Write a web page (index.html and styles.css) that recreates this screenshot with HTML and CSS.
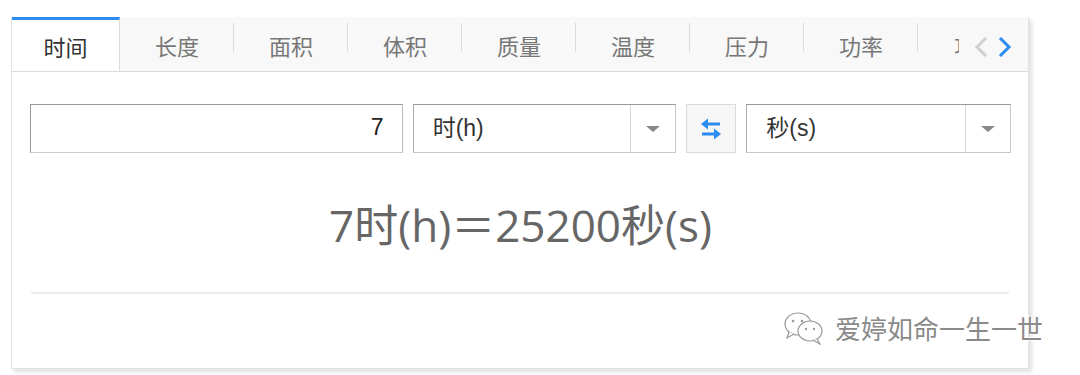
FILE: index.html
```
<!DOCTYPE html>
<html lang="zh-CN">

<head>
  <meta charset="UTF-8" />
  <title>单位换算</title>
  <link rel="stylesheet" href="styles.css">
</head>

<body>

  <div class="card">
    <div class="tabs">
      <div class="tab-list">
        <div class="tab active">时间</div>
        <div class="tab">长度</div>
        <div class="tab">面积</div>
        <div class="tab">体积</div>
        <div class="tab">质量</div>
        <div class="tab">温度</div>
        <div class="tab">压力</div>
        <div class="tab">功率</div>
        <div class="tab">功</div>
      </div>
      <div class="tab-nav">
        <svg class="nav-prev" width="16" height="22" viewBox="0 0 16 22">
          <path d="M13 2 L4 11 L13 20" fill="none" stroke="#cfcfcf" stroke-width="3" />
        </svg>
        <svg class="nav-next" width="16" height="22" viewBox="0 0 16 22">
          <path d="M3 2 L12 11 L3 20" fill="none" stroke="#2d8cf0" stroke-width="3" />
        </svg>
      </div>
    </div>

    <div class="panel">
      <div class="convert-row">
        <input type="text" class="num-input" value="7" />
        <div class="unit-select">
          <span class="unit-text">时(h)</span>
          <span class="unit-arrow"></span>
        </div>
        <button class="swap-btn">
          <svg width="22" height="24" viewBox="0 0 22 24">
            <path d="M3 7 H20" stroke="#2d8cf0" stroke-width="3" fill="none" />
            <path d="M1 7 L8 1.5 L8 12.5 Z" fill="#2d8cf0" />
            <path d="M2 17 H19" stroke="#2d8cf0" stroke-width="3" fill="none" />
            <path d="M21 17 L14 11.5 L14 22.5 Z" fill="#2d8cf0" />
          </svg>
        </button>
        <div class="unit-select">
          <span class="unit-text">秒(s)</span>
          <span class="unit-arrow"></span>
        </div>
      </div>

      <div class="result">7时(h)＝25200秒(s)</div>

      <div class="divider"></div>
    </div>
  </div>

  <div class="watermark">
    <svg width="42" height="34" viewBox="0 0 42 34">
      <ellipse cx="15" cy="13" rx="13" ry="11" fill="#fff" stroke="#999" stroke-width="1.2" />
      <path d="M6 21 L4 27 L11 23" fill="#fff" stroke="#999" stroke-width="1.2" />
      <ellipse cx="27" cy="20" rx="12" ry="10" fill="#fff" stroke="#999" stroke-width="1.2" />
      <path d="M34 28 L37 33 L30 29" fill="#fff" stroke="#999" stroke-width="1.2" />
      <circle cx="10" cy="10" r="1.3" fill="#999" />
      <circle cx="19" cy="10" r="1.3" fill="#999" />
      <circle cx="23" cy="18" r="1.2" fill="#999" />
      <circle cx="31" cy="18" r="1.2" fill="#999" />
    </svg>
    <span>爱婷如命一生一世</span>
  </div>

</body>

</html>
```

FILE: styles.css
```
body {
  margin: 0;
  background: #fff;
  font-family: "Liberation Sans", "Noto Sans CJK SC", sans-serif;
  position: relative;
  width: 1080px;
  height: 375px;
  overflow: hidden;
}

.card {
  margin: 17px 0 0 11px;
  width: 1016px;
  height: 351px;
  border: 1px solid #e2e2e2;
  border-top: none;
  box-shadow: 3px 3px 4px rgba(0, 0, 0, 0.12);
  background: #fff;
}

.tabs {
  display: flex;
  height: 54px;
  background: #f8f8f8;
  border-bottom: 1px solid #dcdcdc;
}

.tab-list {
  display: flex;
  width: 947px;
  overflow: hidden;
  flex-shrink: 0;
}

.tab {
  position: relative;
  flex-shrink: 0;
  width: 114px;
  height: 54px;
  line-height: 56px;
  text-align: center;
  font-size: 22px;
  color: #777;
  font-family: "Noto Sans CJK SC", sans-serif;
}

.tab::after {
  content: "";
  position: absolute;
  right: 0;
  top: 6px;
  width: 1px;
  height: 29px;
  background: #dadada;
}

.tab.active {
  width: 107px;
  height: 52px;
  line-height: 53px;
  background: #fff;
  color: #333;
  border-top: 3px solid #2d8cf0;
  border-right: 1px solid #dcdcdc;
  margin-bottom: -1px;
}

.tab.active::after,
.tab:nth-child(8)::after {
  display: none;
}

.tab:nth-child(8)::before {
  content: "";
  position: absolute;
  right: 0;
  top: 6px;
  width: 1px;
  height: 29px;
  background: #dadada;
}

.tab:last-child {
  text-align: left;
  padding-left: 36px;
  box-sizing: border-box;
}

.tab-nav {
  display: flex;
  align-items: center;
  gap: 8px;
  padding: 6px 0 0 14px;
  height: 48px;
  background: #f8f8f8;
}

.panel {
  padding: 32px 17px 0 18px;
}

.convert-row {
  display: flex;
  gap: 10px;
  height: 49px;
}

.num-input {
  box-sizing: border-box;
  width: 373px;
  height: 49px;
  border: 1px solid #bbb;
  border-top-color: #999;
  border-left-color: #999;
  border-bottom-color: #ccc;
  font-family: "Liberation Sans", sans-serif;
  font-size: 23px;
  text-align: right;
  padding: 0 18px 2px 0;
  color: #222;
  outline: none;
}

.unit-select {
  box-sizing: border-box;
  width: 264px;
  height: 49px;
  display: flex;
  border: 1px solid #c8c8c8;
  border-top-color: #999;
  border-left-color: #aaa;
  background: #fff;
}

.unit-select:last-child {
  width: 265px;
}

.unit-text {
  flex: 1;
  padding-left: 19px;
  line-height: 47px;
  font-size: 23px;
  color: #333;
  font-family: "Liberation Sans", "Noto Sans CJK SC", sans-serif;
}

.unit-arrow {
  width: 44px;
  border-left: 1px solid #d8d8d8;
  display: flex;
  align-items: center;
  justify-content: center;
}

.unit-arrow::after {
  content: "";
  border-left: 7px solid transparent;
  border-right: 7px solid transparent;
  border-top: 6px solid #888;
}

.swap-btn {
  box-sizing: border-box;
  width: 50px;
  height: 49px;
  border: 1px solid #dadada;
  background: #f6f6f6;
  padding: 0;
  display: flex;
  align-items: center;
  justify-content: center;
}

.result {
  text-align: center;
  margin-top: 44px;
  font-size: 44px;
  line-height: 56px;
  color: #666;
  font-family: "Open Sans", "Noto Sans CJK SC", sans-serif;
}

.divider {
  margin: 39px 2px 0 1px;
  height: 2px;
  background: #ececec;
}

.watermark {
  position: absolute;
  left: 783px;
  top: 309px;
  display: flex;
  align-items: center;
  gap: 10px;
  color: #8a8a8a;
  font-size: 26px;
  font-family: "Noto Sans CJK SC", sans-serif;
  text-shadow: 1px 1px 0 #fff, -1px -1px 0 #fff;
}
```
